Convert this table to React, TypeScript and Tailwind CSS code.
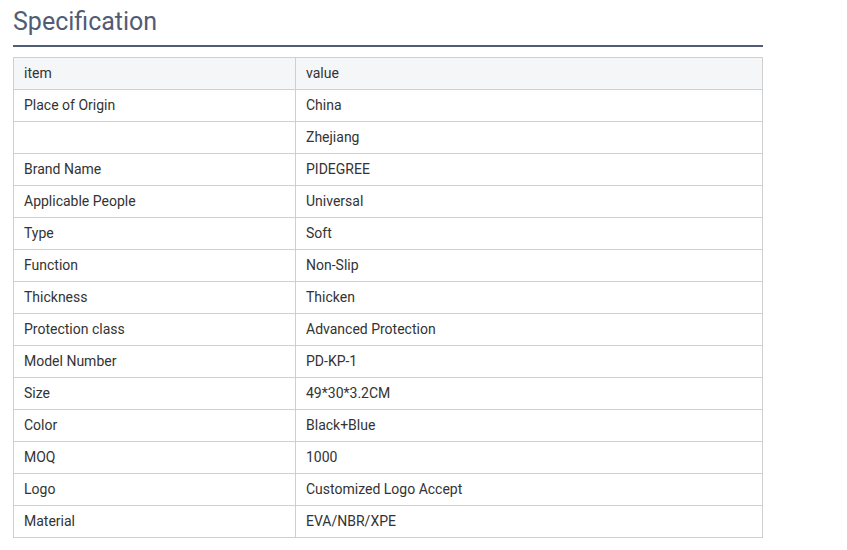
const rows: [string, string][] = [
  ["Place of Origin", "China"],
  ["", "Zhejiang"],
  ["Brand Name", "PIDEGREE"],
  ["Applicable People", "Universal"],
  ["Type", "Soft"],
  ["Function", "Non-Slip"],
  ["Thickness", "Thicken"],
  ["Protection class", "Advanced Protection"],
  ["Model Number", "PD-KP-1"],
  ["Size", "49*30*3.2CM"],
  ["Color", "Black+Blue"],
  ["MOQ", "1000"],
  ["Logo", "Customized Logo Accept"],
  ["Material", "EVA/NBR/XPE"],
];

export default function App() {
  return (
    <div className="min-h-[550px] bg-white px-[13px] pt-[5px]" style={{ fontFamily: "Roboto, 'Liberation Sans', sans-serif" }}>
      <div className="w-[750px]">
        <h2 className="text-[25px] leading-[34px] text-[#505c74] pb-[6px] border-b-2 border-[#505d74]">Specification</h2>
        <table className="mt-[10px] w-full border-collapse text-[14px] text-[#333333]">
          <tbody>
            <tr className="bg-[#f5f6f8]">
              <td className="w-[282px] h-[32px] border border-[#cfcfcf] px-[10px] py-0">item</td>
              <td className="h-[32px] border border-[#cfcfcf] px-[10px] py-0">value</td>
            </tr>
            {rows.map(([k, v], i) => (
              <tr key={i}>
                <td className="h-[32px] border border-[#cfcfcf] px-[10px] py-0">{k}</td>
                <td className="h-[32px] border border-[#cfcfcf] px-[10px] py-0">{v}</td>
              </tr>
            ))}
          </tbody>
        </table>
      </div>
    </div>
  );
}
